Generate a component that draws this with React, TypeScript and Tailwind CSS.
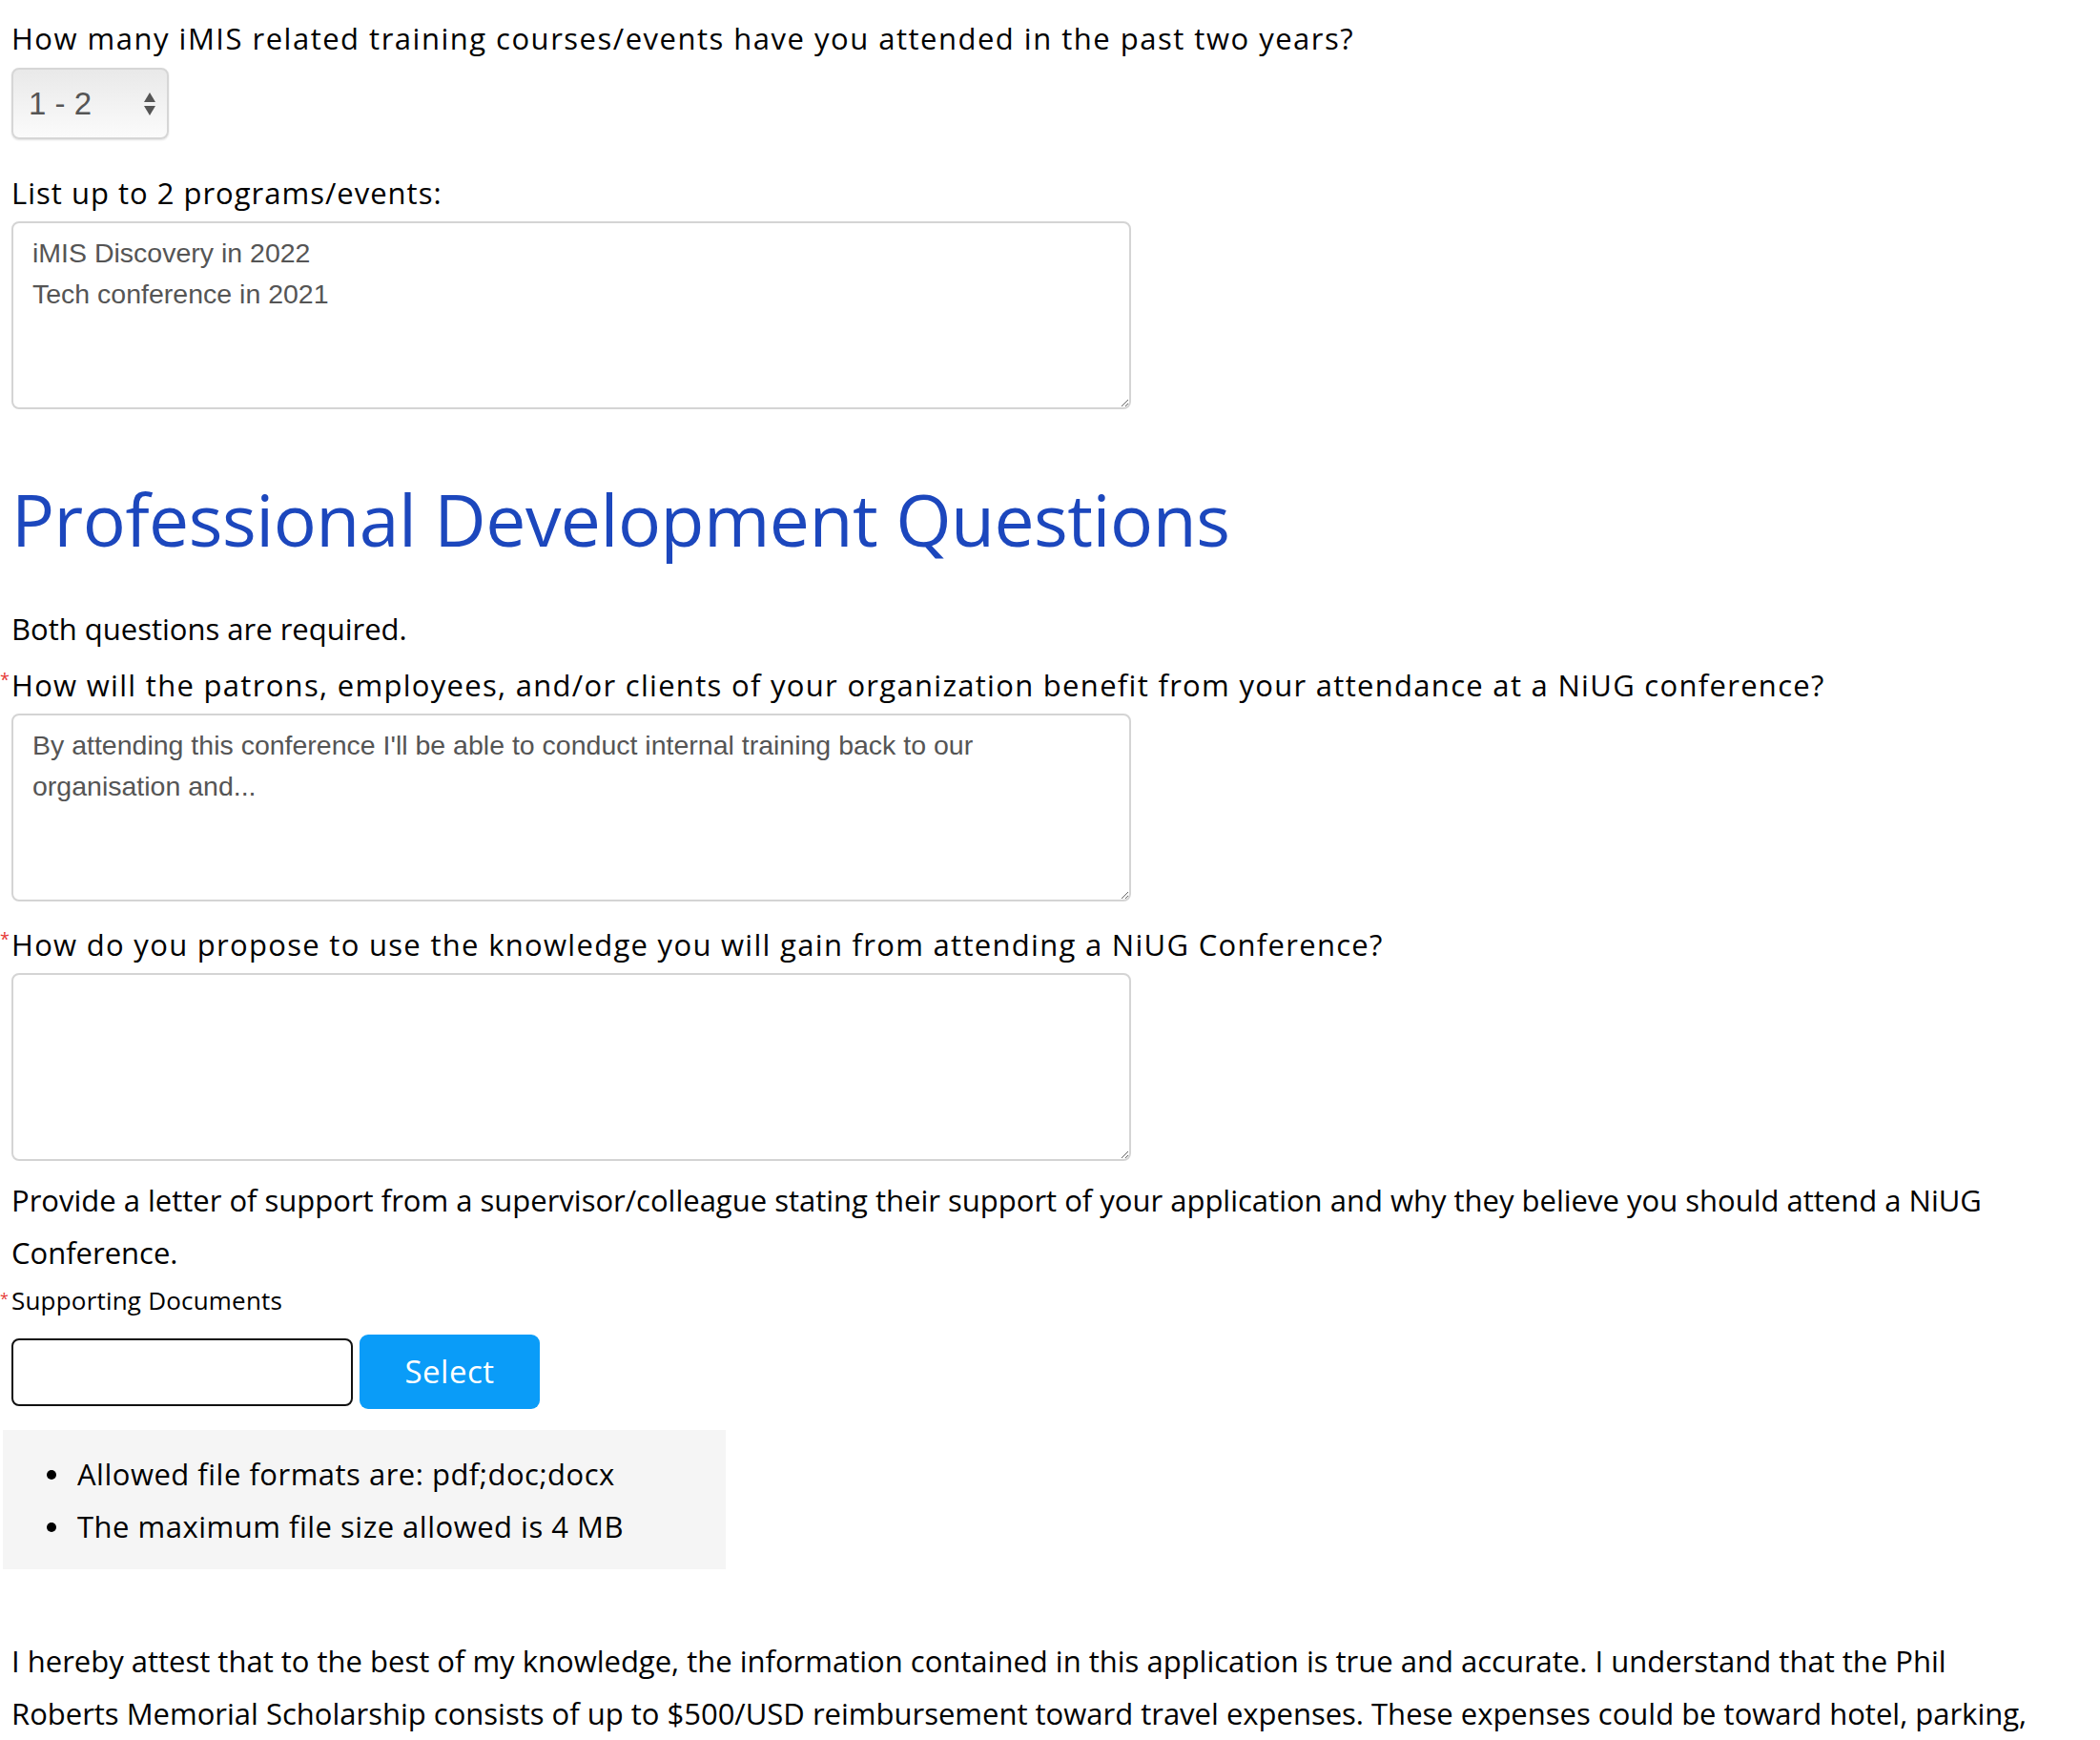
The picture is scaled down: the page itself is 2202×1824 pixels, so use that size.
import React from 'react'

const body = "font-['Open_Sans',sans-serif]"
const field = "font-['Liberation_Sans',Arial,sans-serif] tracking-normal"

function Required({ top }: { top: string }) {
  return <span className={`absolute left-[-12px] ${top} text-[18px] leading-none text-[#e53935]`}>*</span>
}

function Label({ children, required, track = 'tracking-[1.3px]' }: { children: React.ReactNode; required?: boolean; track?: string }) {
  return (
    <div className={`relative text-[31px] leading-[55px] text-black ${track}`}>
      {required && <Required top="top-[12px]" />}
      {children}
    </div>
  )
}

function Area({ value }: { value?: string }) {
  return (
    <textarea
      defaultValue={value}
      className={`${field} block w-[1174px] h-[197px] mt-[2px] pl-[20px] pr-[34px] py-[10px] text-[28.5px] leading-[43px] text-[#555] bg-white border-2 border-[#d4d4d4] rounded-[8px] outline-none`}
    />
  )
}

export default function App() {
  return (
    <div className={`${body} min-h-screen bg-white text-black pl-[12px] pr-[12px] pt-[13px]`}>
      <Label track="tracking-[1.5px]">How many iMIS related training courses/events have you attended in the past two years?</Label>

      <div className="mt-[3px] w-[165px] h-[75px] rounded-[8px] border-2 border-[#d6d6d6] bg-gradient-to-b from-[#e9e9e9] to-[#fbfbfb] shadow-[0_1px_2px_rgba(0,0,0,0.12)] flex items-center justify-between pl-[16px] pr-[10px]">
        <span className={`${field} text-[33px] tracking-[1px] text-[#555]`}>1 - 2</span>
        <svg width="16" height="30" viewBox="0 0 16 30">
          <path d="M8 3 L14 13 L2 13 Z" fill="#555" />
          <path d="M2 17 L14 17 L8 27 Z" fill="#555" />
        </svg>
      </div>

      <div className="mt-[29px]">
        <Label track="tracking-[1px]">List up to 2 programs/events:</Label>
      </div>
      <Area value={'iMIS Discovery in 2022\nTech conference in 2021'} />

      <h1 className="mt-[70px] text-[75px] leading-[90px] font-medium text-[#1c47bd] tracking-[-0.5px]">
        Professional Development Questions
      </h1>

      <div className="mt-[43px]">
        <Label track="tracking-normal">Both questions are required.</Label>
      </div>
      <div className="mt-[4px]">
        <Label required track="tracking-[1.3px]">How will the patrons, employees, and/or clients of your organization benefit from your attendance at a NiUG conference?</Label>
      </div>
      <Area value={"By attending this conference I'll be able to conduct internal training back to our organisation and..."} />

      <div className="mt-[18px]">
        <Label required track="tracking-[1.3px]">How do you propose to use the knowledge you will gain from attending a NiUG Conference?</Label>
      </div>
      <Area />

      <div className="mt-[14px] text-[31px] leading-[55px]">
        Provide a letter of support from a supervisor/colleague stating their support of your application and why they believe you should attend a NiUG Conference.
      </div>

      <div className="relative mt-[4px] text-[26px] leading-[36px] tracking-[0.2px]">
        <span className="absolute left-[-12px] top-[8px] text-[16px] leading-none text-[#e53935]">*</span>
        Supporting Documents
      </div>

      <div className="mt-[18px] flex items-center gap-[7px]">
        <div className="w-[358px] h-[71px] rounded-[8px] border-2 border-[#111] bg-white" />
        <button className="w-[189px] h-[78px] rounded-[9px] bg-[#0a9cf8] text-white text-[33px] tracking-[0.5px]">Select</button>
      </div>

      <div className="mt-[22px] -ml-[9px] w-[758px] bg-[#f5f5f5] pt-[19px] pb-[17px] pl-[46px]">
        {['Allowed file formats are: pdf;doc;docx', 'The maximum file size allowed is 4 MB'].map((t) => (
          <div key={t} className="flex items-center text-[31px] leading-[55px] tracking-[0.5px]">
            <span className="w-[10px] h-[10px] rounded-full bg-black mr-[22px]" />
            {t}
          </div>
        ))}
      </div>

      <p className="mt-[69px] text-[31px] leading-[55px]">
        I hereby attest that to the best of my knowledge, the information contained in this application is true and accurate. I understand that the Phil
        <br />
        Roberts Memorial Scholarship consists of up to $500/USD reimbursement toward travel expenses. These expenses could be toward hotel, parking, mileage, airfare or conference registration fees and will be reimbursed upon submission of receipts.
      </p>
    </div>
  )
}
